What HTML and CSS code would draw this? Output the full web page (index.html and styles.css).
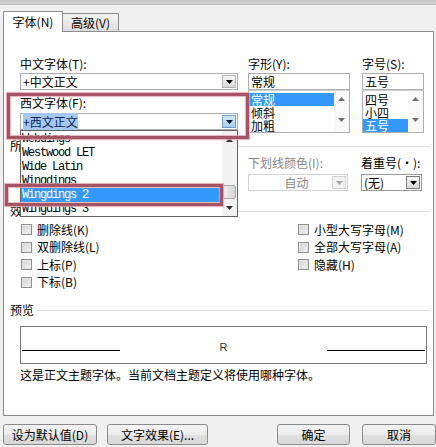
FILE: index.html
```html
<!DOCTYPE html>
<html lang="zh-CN">
<head>
<meta charset="utf-8">
<title>字体</title>
<link rel="stylesheet" href="styles.css">
</head>
<body>
<div class="dialog">
  <div class="topstrip"></div>
  <div class="tabs">
    <div class="tab active">字体(N)</div>
    <div class="tab">高级(V)</div>
  </div>
  <div class="panel">
    <div class="fonts">
      <div class="col-left">
        <div class="label">中文字体(T):</div>
        <div class="combo"><span class="val">+中文正文</span><span class="btn"><svg width="7" height="4" viewBox="0 0 7 4"><path d="M0 0h7L3.5 4z" fill="#000"/></svg></span></div>
        <div class="label l2">西文字体(F):</div>
        <div class="combo open"><span class="val"><span class="hl">+西文正文</span></span><span class="btn hot"><svg width="7" height="4" viewBox="0 0 7 4"><path d="M0 0h7L3.5 4z" fill="#0b1a33"/></svg></span>
          <div class="droplist">
            <div class="ditems">
              <div class="ditem">Webdings</div>
              <div class="ditem">Westwood LET</div>
              <div class="ditem">Wide Latin</div>
              <div class="ditem">Wingdings</div>
              <div class="ditem sel">Wingdings 2</div>
              <div class="ditem">Wingdings 3</div>
            </div>
            <div class="dscroll">
              <div class="sbtn"><svg width="7" height="4" viewBox="0 0 7 4"><path d="M0 4h7L3.5 0z" fill="#333"/></svg></div>
              <div class="track"><div class="thumb"></div></div>
              <div class="sbtn"><svg width="7" height="4" viewBox="0 0 7 4"><path d="M0 0h7L3.5 4z" fill="#333"/></svg></div>
            </div>
          </div>
        </div>
      </div>
      <div class="col-mid">
        <div class="label">字形(Y):</div>
        <div class="textbox">常规</div>
        <div class="listbox">
          <div class="items">
            <div class="item sel">常规</div>
            <div class="item">倾斜</div>
            <div class="item">加粗</div>
          </div>
          <div class="lscroll">
            <svg width="7" height="4" viewBox="0 0 7 4"><path d="M0 4h7L3.5 0z" fill="#707070"/></svg>
            <svg width="7" height="4" viewBox="0 0 7 4"><path d="M0 0h7L3.5 4z" fill="#707070"/></svg>
          </div>
        </div>
      </div>
      <div class="col-right">
        <div class="label">字号(S):</div>
        <div class="textbox">五号</div>
        <div class="listbox">
          <div class="items">
            <div class="item">四号</div>
            <div class="item">小四</div>
            <div class="item sel">五号</div>
          </div>
          <div class="lscroll">
            <svg width="7" height="4" viewBox="0 0 7 4"><path d="M0 4h7L3.5 0z" fill="#707070"/></svg>
            <svg width="7" height="4" viewBox="0 0 7 4"><path d="M0 0h7L3.5 4z" fill="#707070"/></svg>
          </div>
        </div>
      </div>
    </div>

    <div class="group"><span>所有文字</span></div>
    <div class="colors">
      <div class="cell"></div>
      <div class="cell"></div>
      <div class="cell disabled">
        <div class="label">下划线颜色(I):</div>
        <div class="combo"><span class="val center">自动</span><span class="btn"><svg width="7" height="4" viewBox="0 0 7 4"><path d="M0 0h7L3.5 4z" fill="#a8a8a8"/></svg></span></div>
      </div>
      <div class="cell">
        <div class="label">着重号(·):</div>
        <div class="combo dark"><span class="val">(无)</span><span class="btn"><svg width="7" height="4" viewBox="0 0 7 4"><path d="M0 0h7L3.5 4z" fill="#000"/></svg></span></div>
      </div>
    </div>

    <div class="group g2"><span>效果</span></div>
    <div class="checks">
      <div class="checkcol">
        <div class="check"><span class="box"></span>删除线(K)</div>
        <div class="check"><span class="box"></span>双删除线(L)</div>
        <div class="check"><span class="box"></span>上标(P)</div>
        <div class="check"><span class="box"></span>下标(B)</div>
      </div>
      <div class="checkcol right">
        <div class="check"><span class="box"></span>小型大写字母(M)</div>
        <div class="check"><span class="box"></span>全部大写字母(A)</div>
        <div class="check"><span class="box"></span>隐藏(H)</div>
      </div>
    </div>

    <div class="group g3"><span>预览</span></div>
    <div class="preview">
      <span class="pline"></span>
      <span class="sample">R</span>
      <span class="pline"></span>
    </div>
    <div class="note">这是正文主题字体。当前文档主题定义将使用哪种字体。</div>
  </div>

  <div class="buttons">
    <div class="button b1">设为默认值(D)</div>
    <div class="button b2">文字效果(E)...</div>
    <div class="button b3">确定</div>
    <div class="button b4">取消</div>
  </div>

  <div class="mark mark1"></div>
  <div class="mark mark2"></div>
</div>
</body>
</html>
```

FILE: styles.css
```css
* {
  box-sizing: border-box;
  margin: 0;
  padding: 0;
}

html, body {
  width: 436px;
  height: 447px;
  overflow: hidden;
}

body {
  background: #f0f0f0;
  font: 12px/16px "Noto Sans CJK SC", "Noto Sans", sans-serif;
  color: #000;
}

.dialog {
  position: relative;
  width: 436px;
  height: 447px;
}

.topstrip {
  height: 5px;
  background: linear-gradient(#c4c4c4, #d4d4d4);
  border-bottom: 1px solid #bdbdbd;
}

/* tabs */
.tabs {
  display: flex;
  align-items: flex-end;
  height: 20px;
  margin: 6px 0 0 3px;
}

.tab {
  width: 56px;
  height: 18px;
  border: 1px solid #8c8c8c;
  border-left: 0;
  border-bottom: 0;
  background: linear-gradient(#f4f4f4, #dcdcdc);
  line-height: 17px;
  text-align: center;
}

.tab.active {
  position: relative;
  z-index: 2;
  width: 60px;
  height: 21px;
  margin-bottom: -1px;
  border-left: 1px solid #8c8c8c;
  background: #fff;
  line-height: 20px;
}

/* panel */
.panel {
  width: 431px;
  height: 385px;
  margin-left: 3px;
  border: 1px solid #8c8c8c;
  background: #fff;
}

.label {
  height: 16px;
  line-height: 16px;
  white-space: nowrap;
}

.fonts {
  display: flex;
  align-items: flex-start;
  margin: 24px 0 0 16px;
}

.col-left { width: 218px; }
.col-mid { width: 102px; margin-left: 10px; }
.col-right { width: 62px; margin-left: 12px; }

.l2 { margin-top: 5px; }

.combo {
  position: relative;
  display: flex;
  align-items: center;
  height: 17px;
  margin-top: 1px;
  border: 1px solid #abadb3;
  background: #fff;
}

.col-left .l2 + .combo { margin-top: 2px; }

.combo .val {
  flex: 1;
  padding-left: 2px;
  line-height: 15px;
  white-space: nowrap;
}

.combo .val.center {
  text-align: center;
  padding-left: 12px;
}

.combo .hl {
  background: #a6c8ef;
  color: #0d2756;
}

.combo .btn {
  display: flex;
  align-items: center;
  justify-content: center;
  width: 14px;
  height: 13px;
  margin-right: 1px;
  border: 1px solid #b3b3b3;
  background: linear-gradient(#f6f6f6, #dadada);
}

.combo .btn.hot {
  border-color: #6f9cc6;
  background: linear-gradient(#d6eafa, #a9cdea);
}

.combo.open { z-index: 5; }

.combo.dark { border-color: #9a9a9a; }
.combo.dark .btn { border-color: #7a7a7a; }

/* drop-down list */
.droplist {
  position: absolute;
  top: 16px;
  left: -1px;
  display: flex;
  width: 218px;
  height: 87px;
  border: 1px solid #646464;
  background: #fff;
}

.ditems {
  flex: 1;
  padding-top: 1px;
  overflow: hidden;
}

.ditem {
  height: 14px;
  padding-left: 1px;
  font: 12px/14px "Liberation Mono", "DejaVu Sans Mono", monospace;
  letter-spacing: -1.2px;
  white-space: nowrap;
}

.ditem.sel {
  background: #3399ff;
  color: #fff;
}

.dscroll {
  display: flex;
  flex-direction: column;
  width: 15px;
  background: #f2f2f2;
}

.sbtn {
  display: flex;
  align-items: center;
  justify-content: center;
  height: 17px;
}

.track {
  flex: 1;
  display: flex;
  flex-direction: column;
  justify-content: flex-end;
  padding: 0 1px;
}

.thumb {
  height: 14px;
  border: 1px solid #a8a8a8;
  border-radius: 2px;
  background: linear-gradient(90deg, #f0f0f0, #d4d4d4);
}

/* style / size lists */
.textbox {
  height: 17px;
  margin-top: 1px;
  padding-left: 2px;
  border: 1px solid #abadb3;
  line-height: 15px;
}

.listbox {
  display: flex;
  height: 43px;
  border: 1px solid #abadb3;
  border-top-color: #d0d0d0;
}

.items {
  flex: 1;
  padding-top: 2px;
}

.item {
  height: 13px;
  padding-left: 2px;
  line-height: 13px;
}

.item.sel {
  background: #3399ff;
  color: #fff;
}

.lscroll {
  display: flex;
  flex-direction: column;
  justify-content: space-between;
  align-items: center;
  width: 15px;
  padding: 6px 0 10px;
  background: #f9f9f9;
}

/* group headers */
.group {
  display: flex;
  align-items: center;
  gap: 4px;
  height: 16px;
  margin-top: 5px;
  padding: 0 3px 0 6px;
  line-height: 16px;
}

.group::after {
  content: "";
  flex: 1;
  border-top: 1px solid #dcdcdc;
}

.g2 { margin-top: 12px; }
.g3 { margin-top: 11px; }

/* colour row */
.colors {
  display: grid;
  grid-template-columns: 100px 108px 100px 64px;
  column-gap: 10px;
  height: 36px;
  margin: 1px 0 0 16px;
}

.colors .cell:nth-child(4) { margin-left: 3px; }

.colors .combo { margin-top: 3px; }

.cell.disabled .label,
.cell.disabled .val { color: #858585; }

.cell.disabled .combo { border-color: #d2d2d2; }
.cell.disabled .btn { border-color: #d2d2d2; background: #f2f2f2; }

/* checkboxes */
.checks {
  display: flex;
  margin: 2px 0 0 17px;
}

.checkcol { width: 277px; }
.checkcol.right { width: auto; }

.check {
  display: flex;
  align-items: center;
  gap: 5px;
  height: 17.5px;
  white-space: nowrap;
}

.box {
  width: 11px;
  height: 11px;
  border: 1px solid #8e8f8f;
  background: linear-gradient(135deg, #d2d2d2, #f4f4f4);
  box-shadow: inset 0 0 0 1px #e6e6e6;
}

/* preview */
.preview {
  display: flex;
  justify-content: space-between;
  align-items: flex-end;
  width: 407px;
  height: 38px;
  margin: 8px 0 0 16px;
  padding: 0 1px 12px;
  border: 1px solid #7a7a7a;
}

.pline {
  width: 98px;
  height: 1px;
  background: #000;
}

.sample {
  margin-bottom: -2px;
  font: 11px/11px "Liberation Sans", Arial, sans-serif;
  color: #333;
}

.note {
  margin: 3px 0 0 16px;
  line-height: 16px;
}

/* buttons */
.buttons {
  display: flex;
  height: 21px;
  margin-top: 8px;
}

.button {
  height: 21px;
  border: 1px solid #8a8a8a;
  border-radius: 3px;
  background: linear-gradient(#f4f4f4 0, #ececec 50%, #e0e0e0 50%, #d8d8d8 100%);
  line-height: 19px;
  text-align: center;
  white-space: nowrap;
}

.b1 { width: 94px; margin-left: 3px; }
.b2 { width: 101px; margin-left: 10px; }
.b3 { width: 73px; margin-left: 69px; }
.b4 { width: 74px; margin-left: 12px; }

/* red annotation frames */
.mark {
  position: absolute;
  z-index: 10;
  border: 3px solid #a55365;
  box-shadow: 0 0 1px 1px rgba(226, 160, 172, 0.8), inset 0 0 1px 1px rgba(226, 160, 172, 0.8);
}

.mark1 {
  left: 7px;
  top: 93px;
  width: 242px;
  height: 46px;
}

.mark2 {
  left: 5px;
  top: 184px;
  width: 218px;
  height: 22px;
}
```
